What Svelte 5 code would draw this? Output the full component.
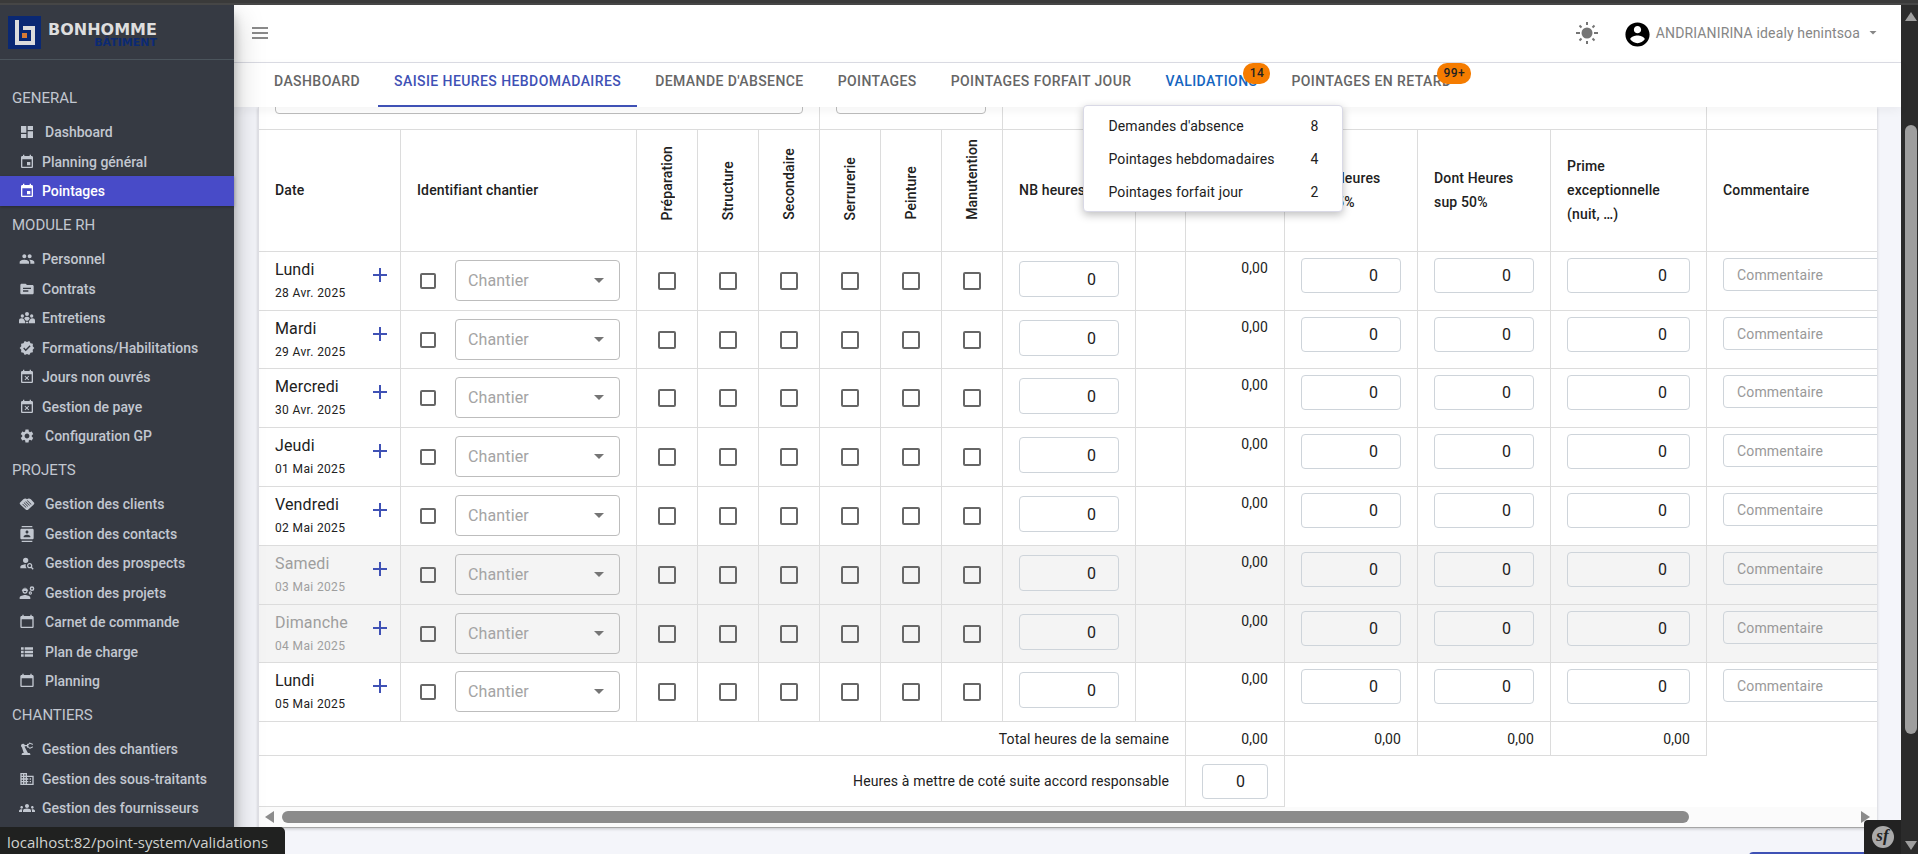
<script>
  const ico = {
    dashboard: 'M3 13h8V3H3v10zm0 8h8v-6H3v6zm10 0h8V11h-8v10zm0-18v6h8V3h-8z',
    event: 'M17 12h-5v5h5v-5zM16 1v2H8V1H6v2H5c-1.11 0-1.99.9-1.99 2L3 19c0 1.1.89 2 2 2h14c1.1 0 2-.9 2-2V5c0-1.1-.9-2-2-2h-1V1h-2zm3 18H5V8h14v11z',
    people: 'M16 11c1.66 0 2.99-1.34 2.99-3S17.66 5 16 5s-3 1.34-3 3 1.34 3 3 3zm-8 0c1.66 0 2.99-1.34 2.99-3S9.66 5 8 5 5 6.34 5 8s1.34 3 3 3zm0 2c-2.33 0-7 1.17-7 3.5V19h14v-2.5c0-2.33-4.67-3.5-7-3.5zm8 0c-.29 0-.62.02-.97.05 1.16.84 1.97 1.97 1.97 3.45V19h6v-2.5c0-2.33-4.67-3.5-7-3.5z',
    topic: 'M20 6h-8l-2-2H4c-1.1 0-1.99.9-1.99 2L2 18c0 1.1.9 2 2 2h16c1.1 0 2-.9 2-2V8c0-1.1-.9-2-2-2zm-6 10H6v-2h8v2zm4-4H6v-2h12v2z',
    meeting: 'M12 3a3 3 0 1 1 0 6 3 3 0 0 1 0-6zM5 6.500a2.500 2.500 0 1 1 0 5 2.500 2.500 0 0 1 0-5zM19 6.500a2.500 2.500 0 1 1 0 5 2.500 2.500 0 0 1 0-5zM8 13c0-2 1.500-3 4-3s4 1 4 3l-2.500 3h-3zM0 20v-4c0-2.200 1.500-3.500 4-3.500 1.500 0 2.500.5 3.200 1.500L9 17v3zM24 20v-4c0-2.200-1.500-3.500-4-3.500-1.500 0-2.500.5-3.200 1.500L15 17v3zM10 17.500h4V20h-4z',
    verified: 'M23 12l-2.44-2.79.34-3.69-3.61-.82-1.89-3.2L12 2.96 8.6 1.5 6.71 4.69 3.1 5.5l.34 3.7L1 12l2.44 2.79-.34 3.7 3.61.82L8.6 22.5l3.4-1.47 3.4 1.46 1.89-3.19 3.61-.82-.34-3.69L23 12zm-12.91 4.72l-3.8-3.81 1.48-1.48 2.32 2.33 5.85-5.87 1.48 1.48-7.33 7.35z',
    busy: 'M9.31 17l2.44-2.44L14.19 17l1.06-1.06-2.44-2.44 2.44-2.44L14.19 10l-2.44 2.44L9.31 10l-1.06 1.06 2.44 2.44-2.44 2.44L9.31 17zM19 3h-1V1h-2v2H8V1H6v2H5c-1.11 0-1.99.9-1.99 2L3 19c0 1.1.89 2 2 2h14c1.1 0 2-.9 2-2V5c0-1.1-.9-2-2-2zm0 16H5V8h14v11z',
    settings: 'M19.14 12.94c.04-.3.06-.61.06-.94 0-.32-.02-.64-.07-.94l2.03-1.58c.18-.14.23-.41.12-.61l-1.92-3.32c-.12-.22-.37-.29-.59-.22l-2.39.96c-.5-.38-1.03-.7-1.62-.94l-.36-2.54c-.04-.24-.24-.41-.48-.41h-3.84c-.24 0-.43.17-.47.41l-.36 2.54c-.59.24-1.13.57-1.62.94l-2.39-.96c-.22-.08-.47 0-.59.22L2.74 8.87c-.12.21-.08.47.12.61l2.03 1.58c-.05.3-.09.63-.09.94s.02.64.07.94l-2.03 1.58c-.18.14-.23.41-.12.61l1.92 3.32c.12.22.37.29.59.22l2.39-.96c.5.38 1.03.7 1.62.94l.36 2.54c.05.24.24.41.48.41h3.84c.24 0 .44-.17.47-.41l.36-2.54c.59-.24 1.13-.56 1.62-.94l2.39.96c.22.08.47 0 .59-.22l1.92-3.32c.12-.22.07-.47-.12-.61l-2.01-1.58zM12 15.6c-1.98 0-3.6-1.62-3.6-3.6s1.62-3.6 3.6-3.6 3.6 1.62 3.6 3.6-1.62 3.6-3.6 3.6z',
    handshake: 'M1 10.500L6.500 5c2-1.600 4-1.200 5.500-.2 1.500-1 4-1.400 5.800.2L23 10.500c0 1-.5 2-1.200 2.700l-8.200 7.300c-1 .8-2.200.8-3.200 0l-8.200-7.300C1.500 12.500 1 11.500 1 10.500zM7 10l6 6 .7-.7-6-6zM9.500 8.500l6 6 .7-.7-6-6zM12 7l6 6 .7-.7-6-6zM5 12.500l5.500 5 .7-.8-5.500-5z',
    contacts: 'M20 0H4v2h16V0zM4 24h16v-2H4v2zM20 4H4c-1.1 0-2 .9-2 2v12c0 1.1.9 2 2 2h16c1.1 0 2-.9 2-2V6c0-1.1-.9-2-2-2zm-8 2.75c1.24 0 2.25 1.01 2.25 2.25s-1.01 2.25-2.25 2.25S9.75 10.24 9.75 9 10.76 6.75 12 6.75zM17 17H7v-1.500c0-1.670 3.330-2.500 5-2.500s5 .83 5 2.500V17z',
    search: 'M10 4a4 4 0 1 1 0 8 4 4 0 0 1 0-8zM10.35 14.01C7.62 13.91 2 15.27 2 18v2h9.540c-2.470-2.760-1.230-5.890-1.190-5.990zM19.43 18.02c.36-.59.57-1.28.57-2.02 0-2.21-1.79-4-4-4s-4 1.79-4 4 1.79 4 4 4c.74 0 1.43-.22 2.02-.57L20.59 22 22 20.59l-2.57-2.57zM16 18c-1.1 0-2-.9-2-2s.9-2 2-2 2 .9 2 2-.9 2-2 2z',
    engineer: 'M9 15c-2.670 0-8 1.340-8 4v2h16v-2c0-2.660-5.330-4-8-4zM4.740 9H5c0 2.210 1.790 4 4 4s4-1.790 4-4h.26c.27 0 .49-.22.49-.49v-.02c0-.27-.22-.49-.49-.49H13c0-1.480-.81-2.750-2-3.450v.95c0 .28-.22.5-.5.5s-.5-.22-.5-.5V4.140C9.680 4.060 9.350 4 9 4s-.68.06-1 .14V5.500c0 .28-.22.5-.5.5S7 5.780 7 5.500v-.95C5.810 5.250 5 6.520 5 8h-.26c-.27 0-.49.22-.49.49v.03c0 .26.22.48.49.48zM11 9c0 1.100-.9 2-2 2s-2-.9-2-2h4zM19.500 2a3.500 3.500 0 1 0 0 7 3.500 3.500 0 0 0 0-7zm0 2.200a1.300 1.300 0 1 1 0 2.600 1.300 1.300 0 0 1 0-2.600zM17 9.500a2.500 2.500 0 1 0 0 5 2.500 2.500 0 0 0 0-5zm0 1.600a.9.9 0 1 1 0 1.800.9.9 0 0 1 0-1.800z',
    calendar: 'M20 3h-1V1h-2v2H7V1H5v2H4c-1.1 0-2 .9-2 2v14c0 1.1.9 2 2 2h16c1.1 0 2-.9 2-2V5c0-1.1-.9-2-2-2zm0 16H4V8h16v11z',
    list: 'M3 5h4v3.500H3zM8.500 5H21v3.500H8.500zM3 10.250h4v3.500H3zM8.500 10.250H21v3.500H8.500zM3 15.500h4V19H3zM8.500 15.500H21V19H8.500z',
    arm: 'M19.93 8.35l-3.6 1.68L14 7.7V6.3l2.330-2.330 3.600 1.680c.38.18.82.01 1-.36.18-.38.01-.82-.36-1l-3.920-1.830c-.38-.18-.83-.1-1.130.2L13.780 4.400c-.18-.24-.46-.4-.78-.4-.55 0-1 .45-1 1v1H8.820C8.400 4.840 7.300 4 6 4 4.340 4 3 5.340 3 7c0 1.100.6 2.050 1.480 2.580L7.080 18H6c-1.100 0-2 .9-2 2v1h13v-1c0-1.100-.9-2-2-2h-1.620L8.410 8.770c.17-.24.31-.49.41-.77H12v1c0 .55.45 1 1 1 .32 0 .6-.16.78-.4l1.740 1.740c.3.3.75.38 1.130.2l3.920-1.830c.38-.18.54-.62.36-1-.18-.37-.62-.54-1-.36z',
    business: 'M12 7V3H2v18h20V7H12zM6 19H4v-2h2v2zm0-4H4v-2h2v2zm0-4H4V9h2v2zm0-4H4V5h2v2zm4 12H8v-2h2v2zm0-4H8v-2h2v2zm0-4H8V9h2v2zm0-4H8V5h2v2zm10 12h-8v-2h2v-2h-2v-2h2v-2h-2V9h8v10zm-2-8h-2v2h2v-2zm0 4h-2v2h2v-2z',
    groups: 'M12 12.75c1.63 0 3.07.39 4.24.9 1.08.48 1.76 1.56 1.76 2.73V18H6v-1.61c0-1.18.68-2.26 1.76-2.73 1.17-.52 2.61-.91 4.24-.91zM4 13c1.1 0 2-.9 2-2s-.9-2-2-2-2 .9-2 2 .9 2 2 2zm1.13 1.1C4.76 14.04 4.39 14 4 14c-.99 0-1.93.21-2.78.58C.48 14.9 0 15.62 0 16.43V18h4.5v-1.61c0-.83.23-1.61.63-2.29zM20 13c1.1 0 2-.9 2-2s-.9-2-2-2-2 .9-2 2 .9 2 2 2zm4 3.43c0-.81-.48-1.53-1.22-1.85-.85-.37-1.79-.58-2.78-.58-.39 0-.76.04-1.13.1.4.68.63 1.46.63 2.29V18H24v-1.57zM12 6c1.66 0 3 1.34 3 3s-1.34 3-3 3-3-1.34-3-3 1.34-3 3-3z',
    user: 'M12 2C6.48 2 2 6.48 2 12s4.48 10 10 10 10-4.48 10-10S17.52 2 12 2zm0 3c1.66 0 3 1.34 3 3s-1.34 3-3 3-3-1.34-3-3 1.34-3 3-3zm0 14.2c-2.5 0-4.71-1.28-6-3.22.03-1.99 4-3.08 6-3.08 1.99 0 5.97 1.09 6 3.08-1.29 1.94-3.5 3.22-6 3.22z'
  };

  const menu = [
    { title: 'GENERAL', items: [
      ['dashboard', 'Dashboard', true],
      ['event', 'Planning général'],
      ['event', 'Pointages', false, true]
    ] },
    { title: 'MODULE RH', items: [
      ['people', 'Personnel'],
      ['topic', 'Contrats'],
      ['meeting', 'Entretiens'],
      ['verified', 'Formations/Habilitations'],
      ['busy', 'Jours non ouvrés'],
      ['busy', 'Gestion de paye'],
      ['settings', 'Configuration GP', true]
    ] },
    { title: 'PROJETS', items: [
      ['handshake', 'Gestion des clients', true],
      ['contacts', 'Gestion des contacts', true],
      ['search', 'Gestion des prospects', true],
      ['engineer', 'Gestion des projets', true],
      ['calendar', 'Carnet de commande', true],
      ['list', 'Plan de charge', true],
      ['calendar', 'Planning', true]
    ] },
    { title: 'CHANTIERS', items: [
      ['arm', 'Gestion des chantiers'],
      ['business', 'Gestion des sous-traitants'],
      ['groups', 'Gestion des fournisseurs']
    ] }
  ];

  const tabs = [
    { label: 'Dashboard' },
    { label: 'Saisie heures hebdomadaires', active: true },
    { label: "Demande d'absence" },
    { label: 'Pointages' },
    { label: 'Pointages forfait jour' },
    { label: 'Validations', hover: true, badge: '14' },
    { label: 'Pointages en retard', badge: '99+' }
  ];

  const pending = [
    ["Demandes d'absence", 8],
    ['Pointages hebdomadaires', 4],
    ['Pointages forfait jour', 2]
  ];

  const tasks = ['Préparation', 'Structure', 'Secondaire', 'Serrurerie', 'Peinture', 'Manutention'];

  const days = [
    ['Lundi', '28 Avr. 2025'],
    ['Mardi', '29 Avr. 2025'],
    ['Mercredi', '30 Avr. 2025'],
    ['Jeudi', '01 Mai 2025'],
    ['Vendredi', '02 Mai 2025'],
    ['Samedi', '03 Mai 2025', true],
    ['Dimanche', '04 Mai 2025', true],
    ['Lundi', '05 Mai 2025']
  ];
</script>

{#snippet icon(name)}
  <svg class="icon" viewBox="0 0 24 24" aria-hidden="true"><path fill-rule="evenodd" d={ico[name]} /></svg>
{/snippet}

<div class="page">
  <div class="topline"></div>
  <div class="shell">
    <aside class="sidebar">
      <a class="brand" href="#accueil">
        <svg class="logo" viewBox="0 0 33 33" aria-hidden="true">
          <rect width="33" height="33" fill="#0a2873" />
          <path d="M7 4h4v21h12V14h-8v-4h12v19H7z" fill="#dcdcdc" />
          <rect x="14" y="17" width="5" height="5" fill="#d87a35" />
        </svg>
        <span class="brand-text">
          <span class="brand-top">BONHOMME</span>
          <span class="brand-sub">BÂTIMENT</span>
        </span>
      </a>
      <nav class="menu" aria-label="Menu principal">
        {#each menu as group}
          <h2>{group.title}</h2>
          <ul>
            {#each group.items as [name, label, wide, current]}
              <li><a href="#menu" class:wide class:current>{@render icon(name)}<span>{label}</span></a></li>
            {/each}
          </ul>
        {/each}
      </nav>
    </aside>

    <div class="main">
      <header class="topbar">
        <button class="burger" aria-label="Ouvrir le menu"><i></i><i></i><i></i></button>
        <div class="account">
          <button class="theme" aria-label="Changer de thème">
            <svg viewBox="0 0 24 24" aria-hidden="true">
              <circle cx="12" cy="12" r="5.500" fill="#757575" />
              <path d="M12 1v3M12 20v3M1 12h4M19 12h4M4.500 4.500l2 2M17.500 17.500l2 2M4.500 19.500l2-2M17.500 6.500l2-2" stroke="#757575" stroke-width="2" />
            </svg>
          </button>
          <button class="user">
            {@render icon('user')}
            <span>ANDRIANIRINA idealy henintsoa</span>
            <b class="caret"></b>
          </button>
        </div>
      </header>

      <nav class="tabs" aria-label="Pointages">
        {#each tabs as tab}
          <div class="tab-slot">
            <a href="#onglet" class="tab" class:active={tab.active} class:hover={tab.hover}>
              {tab.label}
              {#if tab.badge}<span class="badge">{tab.badge}</span>{/if}
            </a>
            {#if tab.hover}
              <ul class="popup">
                {#each pending as [label, count]}
                  <li><span>{label}</span><span>{count}</span></li>
                {/each}
              </ul>
            {/if}
          </div>
        {/each}
      </nav>

      <main class="content">
        <section class="card">
          <div class="clip">
            <table>
              <colgroup>
                <col class="c-date" /><col class="c-site" />
                {#each tasks as _}<col class="c-task" />{/each}
                <col class="c-num" /><col class="c-gap" /><col class="c-sum" />
                <col class="c-num" /><col class="c-num" /><col class="c-bonus" /><col />
              </colgroup>
              <thead>
                <tr class="filters">
                  <td colspan="5"><input class="filter" aria-label="Salarié" /></td>
                  <td colspan="3"><input class="filter" aria-label="Semaine" /></td>
                  <td colspan="6"></td>
                  <td></td>
                </tr>
                <tr class="heads">
                  <th>Date</th>
                  <th>Identifiant chantier</th>
                  {#each tasks as task}<th class="vert"><span>{task}</span></th>{/each}
                  <th>NB heures</th>
                  <th></th>
                  <th></th>
                  <th>Dont Heures sup 25%</th>
                  <th>Dont Heures sup 50%</th>
                  <th>Prime exceptionnelle (nuit, …)</th>
                  <th>Commentaire</th>
                </tr>
              </thead>
              <tbody>
                {#each days as [day, date, off]}
                  <tr class:off>
                    <td>
                      <div class="day">
                        <div><span class="name">{day}</span><span class="date">{date}</span></div>
                        <button class="add" aria-label="Ajouter une ligne"><svg viewBox="0 0 24 24" aria-hidden="true"><path d="M19 13h-6v6h-2v-6H5v-2h6V5h2v6h6v2z" /></svg></button>
                      </div>
                    </td>
                    <td>
                      <div class="site">
                        <input type="checkbox" class="small" aria-label="Sélectionner {day}" />
                        <span class="select">
                          <select aria-label="Chantier {date}"><option>Chantier</option></select>
                          <b class="caret"></b>
                        </span>
                      </div>
                    </td>
                    {#each tasks as task}
                      <td class="tick"><input type="checkbox" aria-label="{task} {date}" /></td>
                    {/each}
                    <td class="nb"><input class="num tall" value="0" aria-label="NB heures {date}" /></td>
                    <td></td>
                    <td class="amount">0,00</td>
                    <td><input class="num" value="0" aria-label="Heures sup 25% {date}" /></td>
                    <td><input class="num" value="0" aria-label="Heures sup 50% {date}" /></td>
                    <td><input class="num" value="0" aria-label="Prime {date}" /></td>
                    <td><input class="comment" placeholder="Commentaire" aria-label="Commentaire {date}" /></td>
                  </tr>
                {/each}
              </tbody>
              <tfoot>
                <tr class="total">
                  <td colspan="10">Total heures de la semaine</td>
                  <td>0,00</td>
                  <td>0,00</td>
                  <td>0,00</td>
                  <td>0,00</td>
                  <td class="bare"></td>
                </tr>
                <tr class="saved">
                  <td colspan="10"><label for="saved">Heures à mettre de coté suite accord responsable</label></td>
                  <td><input id="saved" class="num" value="0" /></td>
                  <td colspan="4" class="bare"></td>
                </tr>
              </tfoot>
            </table>
          </div>
          <div class="hscroll"><i class="arrow left"></i><span class="track"><b class="thumb"></b></span><i class="arrow right"></i></div>
        </section>
        <div class="actions"><button class="save" aria-label="Enregistrer"></button></div>
      </main>
    </div>

    <div class="vscroll"><i class="arrow up"></i><span class="track"><b class="thumb"></b></span><i class="arrow down"></i></div>
  </div>

  <div class="status">localhost:82/point-system/validations</div>
  <button class="debug" aria-label="Barre de débogage"><span>sf</span></button>
</div>

<style>
  :global(body) {
    background: #f4f5fa;
    overflow: hidden;
  }
  .page, .page * { box-sizing: border-box; }
  .page {
    position: relative;
    display: flex;
    flex-direction: column;
    height: 100vh;
    overflow: hidden;
    font-family: Roboto, "Liberation Sans", sans-serif;
    font-size: 14px;
    color: #212121;
  }
  button, input, select { font: inherit; color: inherit; letter-spacing: inherit; }
  button { border: 0; background: none; padding: 0; cursor: pointer; }
  a { text-decoration: none; color: inherit; }
  ul { list-style: none; margin: 0; padding: 0; }
  .topline {
    flex: none;
    height: 5px;
    background: #3a3a3a;
    border-bottom: 2px solid #464646;
  }
  .shell { flex: 1; min-height: 0; display: flex; overflow: hidden; }
  .icon { width: 16px; height: 16px; fill: currentColor; flex: none; }

  /* Sidebar */
  .sidebar {
    flex: none;
    width: 234px;
    background: #363a43;
    color: #c2c7d0;
    z-index: 5;
    box-shadow: 0 14px 28px rgba(0, 0, 0, 0.25), 0 10px 10px rgba(0, 0, 0, 0.22);
  }
  .brand {
    display: flex;
    height: 55px;
    padding: 11px 8px 0;
    gap: 7px;
    border-bottom: 1px solid #4b545c;
  }
  .logo { width: 33px; height: 33px; }
  .brand-text {
    display: flex;
    flex-direction: column;
    align-items: flex-end;
    font-family: "DejaVu Sans", sans-serif;
    font-weight: 700;
    padding-top: 6px;
  }
  .brand-top { font-size: 16px; line-height: 15px; color: #dedede; }
  .brand-sub { font-size: 11px; line-height: 12px; color: #0c2a73; }
  .menu { padding-top: 19px; }
  .menu h2 {
    margin: 0;
    padding: 0 12px;
    height: 38px;
    font-size: 15px;
    line-height: 38px;
    font-weight: 400;
  }
  .menu li { height: 30px; }
  .menu li:nth-child(even) { height: 29px; }
  .menu a {
    display: flex;
    align-items: center;
    height: 100%;
    padding-left: 19px;
    gap: 7px;
    font-weight: 500;
  }
  .menu a.wide { gap: 10px; }
  .menu a.current {
    background: #484bc8;
    color: #fff;
    box-shadow: 0 1px 3px rgba(0, 0, 0, 0.3);
  }

  /* Header */
  .main { flex: 1; min-width: 0; display: flex; flex-direction: column; }
  .topbar {
    flex: none;
    display: flex;
    justify-content: space-between;
    align-items: center;
    height: 58px;
    padding: 0 24px 2px 18px;
    background: #fff;
    border-bottom: 1px solid #dcdde5;
  }
  .burger { display: grid; gap: 3px; width: 16px; }
  .burger i { height: 2px; background: #8a8a8a; }
  .account { display: flex; align-items: center; gap: 24px; }
  .theme { display: flex; }
  .theme svg { width: 24px; height: 24px; }
  .user { display: flex; align-items: center; color: #868686; letter-spacing: 0.01em; }
  .user .icon { width: 29px; height: 29px; color: #000; margin: 3px 4px 0 0; }
  .caret {
    width: 8px;
    height: 4px;
    background: currentColor;
    clip-path: polygon(0 0, 100% 0, 50% 100%);
  }
  .user .caret { margin-left: 9px; }

  .tabs {
    flex: none;
    display: flex;
    gap: 2px;
    height: 44px;
    padding-left: 24px;
    background: #fff;
    z-index: 3;
    box-shadow: 0 3px 10px rgba(0, 0, 0, 0.05);
  }
  .tab-slot { position: relative; }
  .tab {
    position: relative;
    display: block;
    height: 44px;
    padding: 0 16px;
    line-height: 36px;
    font-weight: 500;
    letter-spacing: 0.03em;
    text-transform: uppercase;
    white-space: nowrap;
    color: #666;
  }
  .tab.active { color: #3f51b5; border-bottom: 2px solid #3f51b5; }
  .tab.hover { color: #1565c0; }
  .badge {
    position: absolute;
    left: calc(100% - 30px);
    top: 0;
    min-width: 27px;
    height: 21px;
    padding: 0 6px;
    border-radius: 10px;
    background: #f57c00;
    color: #222;
    font-size: 12px;
    line-height: 20px;
    text-align: center;
  }
  .popup {
    position: absolute;
    right: -70px;
    top: 42px;
    width: 260px;
    padding: 4px 24px 2px;
    background: #fff;
    border: 1px solid #d9d9e6;
    border-radius: 4px;
    box-shadow: 0 3px 8px rgba(0, 0, 0, 0.25);
  }
  .popup li { display: flex; justify-content: space-between; line-height: 33px; letter-spacing: 0.01em; }

  /* Table */
  .content { flex: 1; min-height: 0; padding: 0 24px; overflow: hidden; }
  .card {
    background: #fff;
    border-left: 1px solid #e0e0e6;
    border-bottom: 1px solid #a5a5a5;
    box-shadow: 0 1px 3px rgba(0, 0, 0, 0.2);
  }
  .clip { overflow: hidden; }
  table {
    width: 1818px;
    margin-top: -39px;
    table-layout: fixed;
    border-collapse: separate;
    border-spacing: 0;
    letter-spacing: 0.01em;
  }
  .c-date { width: 142px; }
  .c-site { width: 236px; }
  .c-task { width: 61px; }
  .c-num { width: 133px; }
  .c-gap { width: 50px; }
  .c-sum { width: 99px; }
  .c-bonus { width: 156px; }
  td, th {
    padding: 6px 16px 0;
    vertical-align: top;
    text-align: left;
    border-right: 1px solid #dcdcdc;
    border-bottom: 1px solid #dcdcdc;
  }
  .filters { height: 62px; }
  .filter { display: block; width: 100%; height: 40px; border: 1px solid #bdbdbd; border-radius: 4px; background: #fff; }
  .heads { height: 122px; }
  th { padding: 0 16px 2px; vertical-align: middle; font-weight: 500; line-height: 24px; }
  th.vert { padding: 0 0 31px; vertical-align: bottom; }
  .vert span { display: block; margin: 0 auto; width: 24px; writing-mode: vertical-rl; transform: rotate(180deg); }
  tbody tr { height: 59px; }
  tbody tr:nth-child(5n + 2) { height: 58px; }
  .off { background: #f4f4f4; }
  .day { display: flex; justify-content: space-between; }
  .day .name, .day .date { display: block; }
  .name { font-size: 16px; line-height: 24px; }
  .date { font-size: 12px; line-height: 20px; padding-top: 1px; letter-spacing: 0.03em; }
  .off .day > div { color: #9e9e9e; }
  .add { display: flex; align-self: flex-start; margin: 5px -8px 0 0; }
  .add svg { width: 24px; height: 24px; fill: #3f51b5; }
  .site { display: flex; align-items: center; gap: 19px; padding: 2px 0 0 3px; }
  input[type="checkbox"] {
    appearance: none;
    display: block;
    width: 18px;
    height: 18px;
    margin: 0 auto;
    border: 2px solid #666;
    border-radius: 2px;
  }
  input[type="checkbox"].small { width: 16px; height: 16px; margin: 0; flex: none; }
  .tick { padding: 20px 0 0; }
  .select { flex: 1; display: grid; align-items: center; }
  .select > * { grid-area: 1 / 1; }
  .select select {
    appearance: none;
    height: 41px;
    padding: 0 12px;
    border: 1px solid #bdbdbd;
    border-radius: 4px;
    background: transparent;
    color: #a4a4a4;
    font-size: 16px;
  }
  .select .caret { justify-self: end; width: 10px; height: 5px; margin-right: 16px; background: #757575; pointer-events: none; }
  .num, .comment {
    display: block;
    width: 100%;
    height: 35px;
    border: 1px solid #ced4da;
    border-radius: 4px;
    background: transparent;
    color: #212121;
    font-size: 16px;
    text-align: right;
    padding: 0 22px 0 6px;
  }
  .num.tall { height: 36px; }
  .nb { padding-top: 9px; }
  .comment { height: 33px; font-size: 14px; text-align: left; padding: 0 13px; }
  .comment::placeholder { color: #999; opacity: 1; }
  .amount { text-align: right; line-height: 20px; }
  tfoot td { text-align: right; vertical-align: middle; padding-top: 0; }
  .total { height: 34px; }
  .saved { height: 51px; }
  .bare { border: 0; }

  /* Scrollbars */
  .hscroll { display: flex; align-items: center; gap: 8px; height: 20px; padding: 0 7px 0 6px; background: #fbfbfb; }
  .arrow { flex: none; background: #8b8b8b; width: 9px; height: 12px; }
  .left { clip-path: polygon(100% 0, 100% 100%, 0 50%); }
  .right { clip-path: polygon(0 0, 100% 50%, 0 100%); }
  .track { flex: 1; display: flex; }
  .hscroll .track { padding-right: 164px; }
  .hscroll .thumb { flex: 1; height: 12px; border-radius: 6px; background: #8b8b8b; }
  .vscroll {
    flex: none;
    display: flex;
    flex-direction: column;
    align-items: center;
    width: 17px;
    padding: 7px 0 4px 3px;
    background: #2b2b2b;
  }
  .vscroll .arrow { width: 12px; height: 9px; background: #9e9e9e; }
  .up { clip-path: polygon(50% 0, 100% 100%, 0 100%); }
  .down { clip-path: polygon(0 0, 100% 0, 50% 100%); }
  .vscroll .track { flex-direction: column; padding-top: 104px; }
  .vscroll .thumb { width: 12px; height: 85%; border-radius: 6px; background: #9e9e9e; }

  .actions { display: flex; justify-content: flex-end; padding-top: 24px; }
  .save { width: 128px; height: 36px; border-radius: 4px; background: #3f51b5; }

  .status {
    position: absolute;
    left: 0;
    bottom: 0;
    z-index: 10;
    height: 27px;
    padding: 0 17px 0 7px;
    border-top-right-radius: 5px;
    background: #202120;
    color: #cfd2cf;
    font: 15px/31px "Open Sans", sans-serif;
  }
  .debug {
    position: absolute;
    right: 17px;
    bottom: 0;
    z-index: 10;
    display: grid;
    place-items: center;
    width: 37px;
    height: 34px;
    border-top-left-radius: 4px;
    background: #222;
  }
  .debug span {
    width: 22px;
    height: 22px;
    border-radius: 50%;
    background: #aaa;
    color: #222;
    font: italic 700 17px/20px "Liberation Serif", serif;
    text-align: center;
  }
</style>
